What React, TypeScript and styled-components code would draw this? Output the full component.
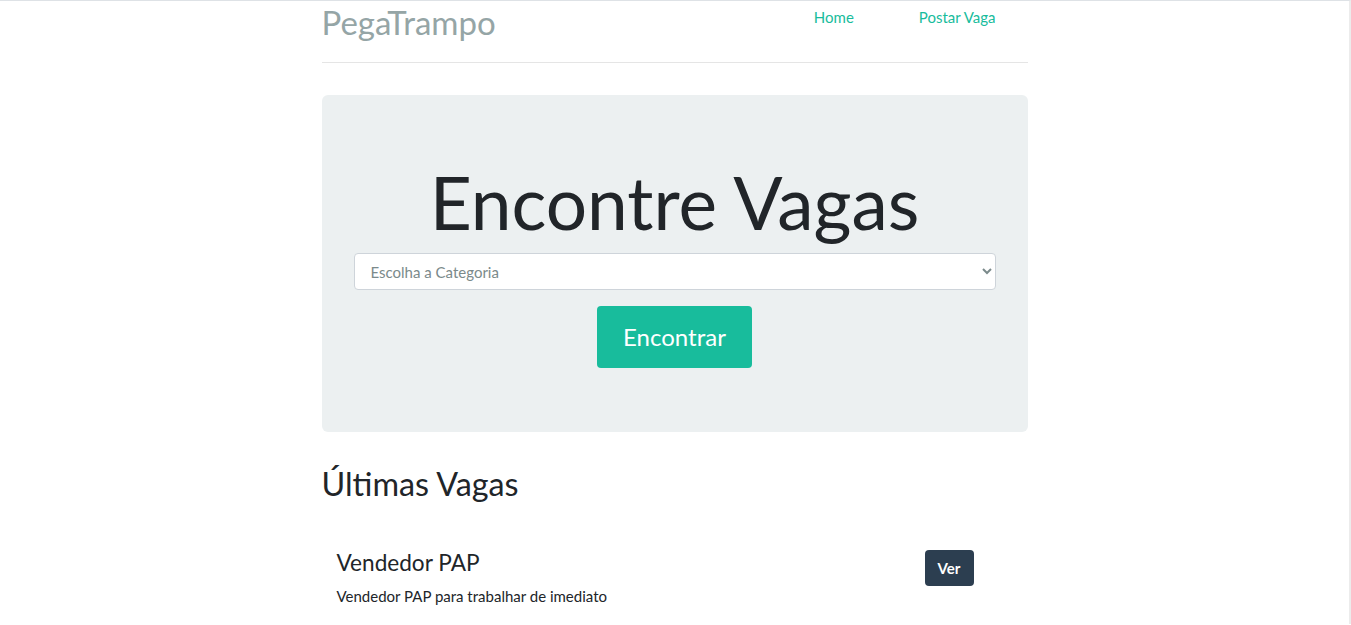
import styled, { createGlobalStyle } from "styled-components";

const GlobalStyle = createGlobalStyle`
  html, body {
    margin: 0;
    padding: 0;
    background: #fff;
  }
  body {
    font-family: Lato, "Helvetica Neue", Arial, sans-serif;
    font-size: 15px;
    line-height: 1.5;
    color: #212529;
    border-top: 1px solid #dee2e6;
    border-right: 2px solid #ececec;
    min-height: 624px;
    box-sizing: border-box;
  }
  * { box-sizing: border-box; }
`;

const Container = styled.div`
  width: 706px;
  margin: 0 auto;
`;

const Header = styled.header`
  display: flex;
  align-items: flex-start;
  justify-content: space-between;
  height: 62px;
  border-bottom: 1px solid #e5e5e5;
`;

const Brand = styled.h3`
  margin: 0;
  font-size: 33px;
  font-weight: 400;
  line-height: 42px;
  color: #95a5a6;
`;

const Nav = styled.nav`
  display: flex;
  gap: 65px;
  padding-right: 32px;
  padding-top: 4px;
`;

const NavLink = styled.a`
  color: #18bc9c;
  text-decoration: none;
  font-size: 15px;
  line-height: 24px;
`;

const Jumbotron = styled.section`
  margin-top: 32px;
  background: #ecf0f1;
  border-radius: 6px;
  height: 337px;
  padding: 63px 32px 0;
  display: flex;
  flex-direction: column;
  align-items: center;
`;

const Title = styled.h1`
  margin: 0;
  font-size: 73px;
  font-weight: 400;
  line-height: 88px;
  color: #212529;
`;

const Select = styled.select`
  width: 100%;
  height: 37px;
  border: 1px solid #ced4da;
  border-radius: 4px;
  background: #fff;
  color: #7b8a8b;
  font-family: inherit;
  font-size: 15px;
  padding: 0 12px;
  margin-top: 7px;
`;

const FindButton = styled.button`
  margin-top: 16px;
  width: 155px;
  height: 62px;
  background: #18bc9c;
  color: #fff;
  border: none;
  border-radius: 4px;
  font-family: inherit;
  font-size: 24px;
  padding-bottom: 2px;
`;

const SectionTitle = styled.h2`
  margin: 32px 0 0;
  font-size: 32.3px;
  font-weight: 400;
  line-height: 40px;
`;

const JobRow = styled.div`
  display: flex;
  justify-content: space-between;
  align-items: flex-start;
  padding: 43px 54px 0 15px;
`;

const JobTitle = styled.h4`
  margin: 0;
  font-size: 22.6px;
  font-weight: 400;
  line-height: 32px;
`;

const JobText = styled.p`
  margin: 6px 0 0;
  font-size: 15px;
`;

const ViewButton = styled.a`
  margin-top: 3px;
  display: inline-flex;
  align-items: center;
  justify-content: center;
  width: 49px;
  height: 36px;
  background: #2c3e50;
  color: #fff;
  border-radius: 4px;
  text-decoration: none;
  font-weight: 700;
  font-size: 15px;
`;

export default function App() {
  return (
    <>
      <GlobalStyle />
      <Container>
        <Header>
          <Brand>PegaTrampo</Brand>
          <Nav>
            <NavLink href="#">Home</NavLink>
            <NavLink href="#">Postar Vaga</NavLink>
          </Nav>
        </Header>
        <Jumbotron>
          <Title>Encontre Vagas</Title>
          <Select defaultValue="">
            <option value="">Escolha a Categoria</option>
          </Select>
          <FindButton>Encontrar</FindButton>
        </Jumbotron>
        <SectionTitle>Últimas Vagas</SectionTitle>
        <JobRow>
          <div>
            <JobTitle>Vendedor PAP</JobTitle>
            <JobText>Vendedor PAP para trabalhar de imediato</JobText>
          </div>
          <ViewButton href="#">Ver</ViewButton>
        </JobRow>
      </Container>
    </>
  );
}
